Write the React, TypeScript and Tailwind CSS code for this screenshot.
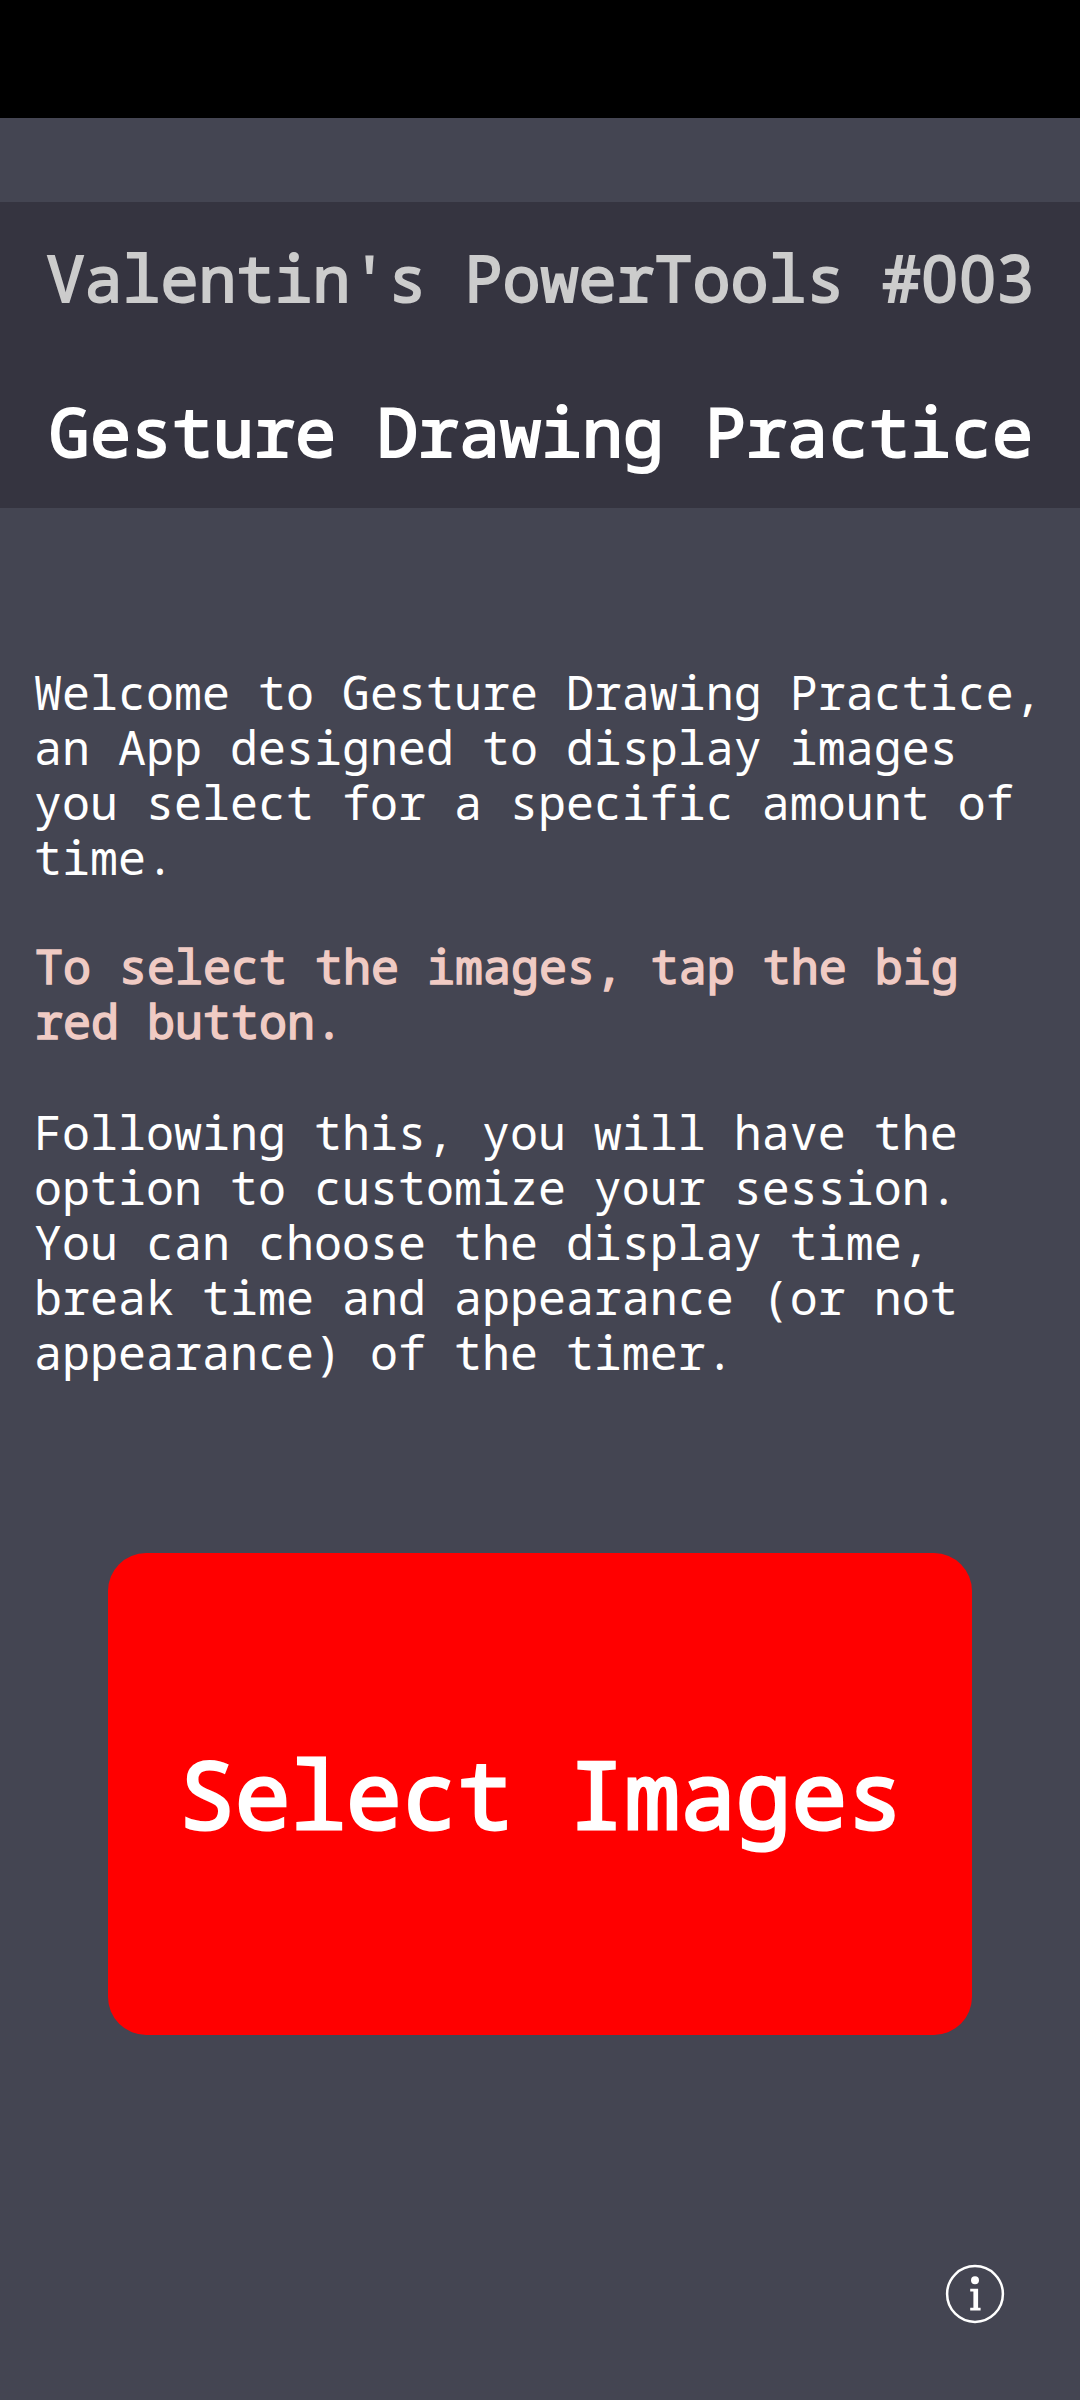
function InfoIcon() {
  return (
    <svg viewBox="0 0 60 60" className="h-[60px] w-[60px]" aria-label="Info">
      <circle cx="30" cy="30" r="27.9" fill="none" stroke="#fff" strokeWidth="2.5" />
      <circle cx="30" cy="16.3" r="4" fill="#fff" />
      <path d="M25.2 24.7H33.1V43.8H35.6V46.6H25.2V43.8H28.4V27.5H25.2Z" fill="#fff" />
    </svg>
  );
}

export default function App() {
  return (
    <div className="flex h-[2400px] w-[1080px] flex-col overflow-hidden bg-[#444552] font-['Noto_Sans_Mono','DejaVu_Sans_Mono',monospace] text-white">
      <div className="h-[118px] shrink-0 bg-black" />

      <header className="mt-[84px] flex h-[306px] shrink-0 flex-col items-center bg-[#353440] pt-[38px] pl-px whitespace-pre">
        <div className="text-[63.33px] leading-[76px] text-[#cccccc] [-webkit-text-stroke:2px_#cccccc]">
          Valentin's PowerTools #
          <span className="mr-[-1px] pl-px font-['Noto_Sans'] tracking-[1.77px]">00</span>3
        </div>
        <h1 className="mt-[75px] pl-px text-[68.33px] leading-[80px] [-webkit-text-stroke:2.2px_#fff]">
          Gesture Drawing Practice
        </h1>
      </header>

      <main className="flex flex-col">
        <div className="mt-[157px] flex flex-col pl-[34px] text-[46.67px] leading-[55px] whitespace-pre">
          <p>
            Welcome to Gesture Drawing Practice,
            <br />
            an App designed to display images
            <br />
            you select for a specific amount of
            <br />
            time.
          </p>
          <p className="mt-[54px] pl-px text-[#f0cbc4] [-webkit-text-stroke:1.5px_#f0cbc4]">
            To select the images, tap the big
            <br />
            red button.
          </p>
          <p className="mt-[56px]">
            Following this, you will have the
            <br />
            option to customize your session.
            <br />
            You can choose the display time,
            <br />
            break time and appearance (or not
            <br />
            appearance) of the timer.
          </p>
        </div>

        <button className="mt-[173px] flex h-[482px] w-[864px] items-center justify-center self-center rounded-[38px] bg-[#ff0000] pb-[3px] pl-[2px] text-[92.8px] leading-[110px] [-webkit-text-stroke:3px_#fff]">
          Select Images
        </button>

        <button className="mt-[229px] mr-[75px] self-end">
          <InfoIcon />
        </button>
      </main>
    </div>
  );
}
